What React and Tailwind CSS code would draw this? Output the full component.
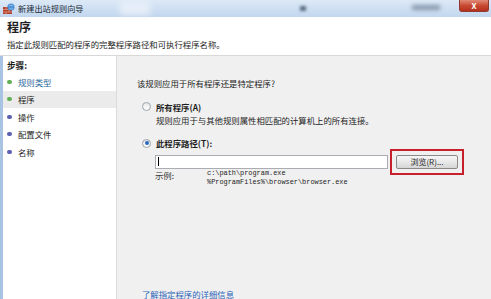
import React from 'react'

const steps = [
    { label: '规则类型', done: true, link: true },
    { label: '程序', done: true, active: true },
    { label: '操作' },
    { label: '配置文件' },
    { label: '名称' },
]

function WallIcon() {
    return (
        <svg width="12" height="11" viewBox="0 0 12 11">
            <rect x="0" y="4" width="9" height="7" fill="#b3402c" />
            <path d="M0 6.5h9M0 9h9M3 4v2.5M6 6.5V9M3 9v2" stroke="#e9b39b" strokeWidth="0.6" />
            <circle cx="8" cy="4" r="3.6" fill="#4f8fd6" />
            <path d="M6 3c1-1 3-1 4 0M6.5 5.5c1 .6 2.4.6 3.3 0" stroke="#bfe0ff" strokeWidth="0.6" fill="none" />
        </svg>
    )
}

function Radio({ checked }) {
    return (
        <span className="w-[9px] h-[9px] rounded-full border border-[#9aa3ad] bg-gradient-to-b from-[#e6e6e6] to-[#ffffff] flex items-center justify-center shrink-0">
            {checked && <span className="w-[4px] h-[4px] rounded-full bg-[#2a6bc4]" />}
        </span>
    )
}

export default function App() {
    return (
        <div className="w-[491px] h-[299px] overflow-hidden bg-[#f0f0f0] flex flex-col text-[#1e1e1e] font-['Noto_Sans_CJK_SC','Noto_Sans',sans-serif] text-[8.4px] leading-none">
            {/* title bar */}
            <div className="h-[17px] shrink-0 relative flex items-center pl-[3px] bg-gradient-to-b from-[#dde9f6] via-[#cfe0f3] to-[#c1d6ee]">
                <WallIcon />
                <span className="ml-[3px] text-[8.2px] text-[#202a36]">新建出站规则向导</span>
                <span className="absolute left-[120px] top-[1px] w-[30px] h-[14px] bg-[#e6eef8] blur-[3px]" />
                <span className="absolute left-[300px] top-[6px] w-[6px] h-[5px] bg-[#5c6f86] blur-[1.5px]" />
                <span className="absolute left-[412px] top-[5px] w-[28px] h-[5px] bg-[#8797ab] blur-[2px]" />
                <span className="absolute right-[2px] top-0 w-[30px] h-[12px] rounded-b-[3px] bg-gradient-to-b from-[#e08a78] via-[#c84a33] to-[#b5301c] border border-[#8e3a2e] border-t-0 flex items-center justify-center text-white text-[8px] font-bold">
                    X
                </span>
            </div>

            {/* header */}
            <div className="h-[39px] shrink-0 bg-white border-b border-[#d8d8d8] pl-[7px] pt-[4px] flex flex-col gap-[7px]">
                <span className="text-[12px] font-bold leading-[12px]">程序</span>
                <span className="text-[8.4px]">指定此规则匹配的程序的完整程序路径和可执行程序名称。</span>
            </div>

            {/* body */}
            <div className="flex flex-1 min-h-0">
                <div className="w-[117px] shrink-0 bg-white border-l-[3px] border-l-[#a9c3e3] border-r border-r-[#dcdcdc] pt-[1px]">
                    <div className="h-[16px] pl-[4px] flex items-center font-bold text-[8.6px]">步骤:</div>
                    <div>
                        {steps.map((s) => (
                            <div
                                key={s.label}
                                className={`h-[17.5px] flex items-center pl-[4px] ${s.active ? 'bg-[#ebebeb]' : ''}`}
                            >
                                <span className={`w-[5px] h-[4px] rounded-full ${s.done ? 'bg-[#5fb052]' : 'bg-[#5a5fb0]'}`} />
                                <span className={`ml-[6px] ${s.link ? 'text-[#2c6a9a]' : ''}`}>{s.label}</span>
                            </div>
                        ))}
                    </div>
                </div>

                <div className="flex-1 flex flex-col pl-[20px] pt-[23px]">
                    <span>该规则应用于所有程序还是特定程序?</span>

                    <div className="mt-[15px] flex items-center gap-[5px] pl-[5px]">
                        <Radio />
                        <span className="font-bold">所有程序(A)</span>
                    </div>
                    <span className="mt-[5px] pl-[19px]">规则应用于与其他规则属性相匹配的计算机上的所有连接。</span>

                    <div className="mt-[14px] flex items-center gap-[5px] pl-[5px]">
                        <Radio checked />
                        <span className="font-bold">此程序路径(T):</span>
                    </div>

                    <div className="mt-[1px] pl-[18px] flex items-center">
                        <div className="w-[233px] h-[14px] bg-white border border-[#abadb3] flex items-center pl-[2px]">
                            <span className="w-px h-[9px] bg-black" />
                        </div>
                        <div className="ml-[2px] p-[4px] border-2 border-[#c8202a]">
                            <div className="w-[62px] h-[14px] rounded-[2px] border border-[#8a8a8a] bg-gradient-to-b from-[#f6f6f6] via-[#e8e8e8] to-[#d6d6d6] flex items-center justify-center text-[8px]">
                                浏览(R)...
                            </div>
                        </div>
                    </div>

                    <div className="-mt-[5px] pl-[18px] flex">
                        <span className="w-[52px] mt-[1px] text-[#333]">示例:</span>
                        <div className="flex flex-col gap-[2px] font-['Liberation_Mono',monospace] text-[6.9px] leading-[7px]">
                            <span>c:\path\program.exe</span>
                            <span>%ProgramFiles%\browser\browser.exe</span>
                        </div>
                    </div>

                    <span className="mt-[104px] pl-[5px] text-[#2a63b8] underline">了解指定程序的详细信息</span>
                </div>
            </div>
        </div>
    )
}
